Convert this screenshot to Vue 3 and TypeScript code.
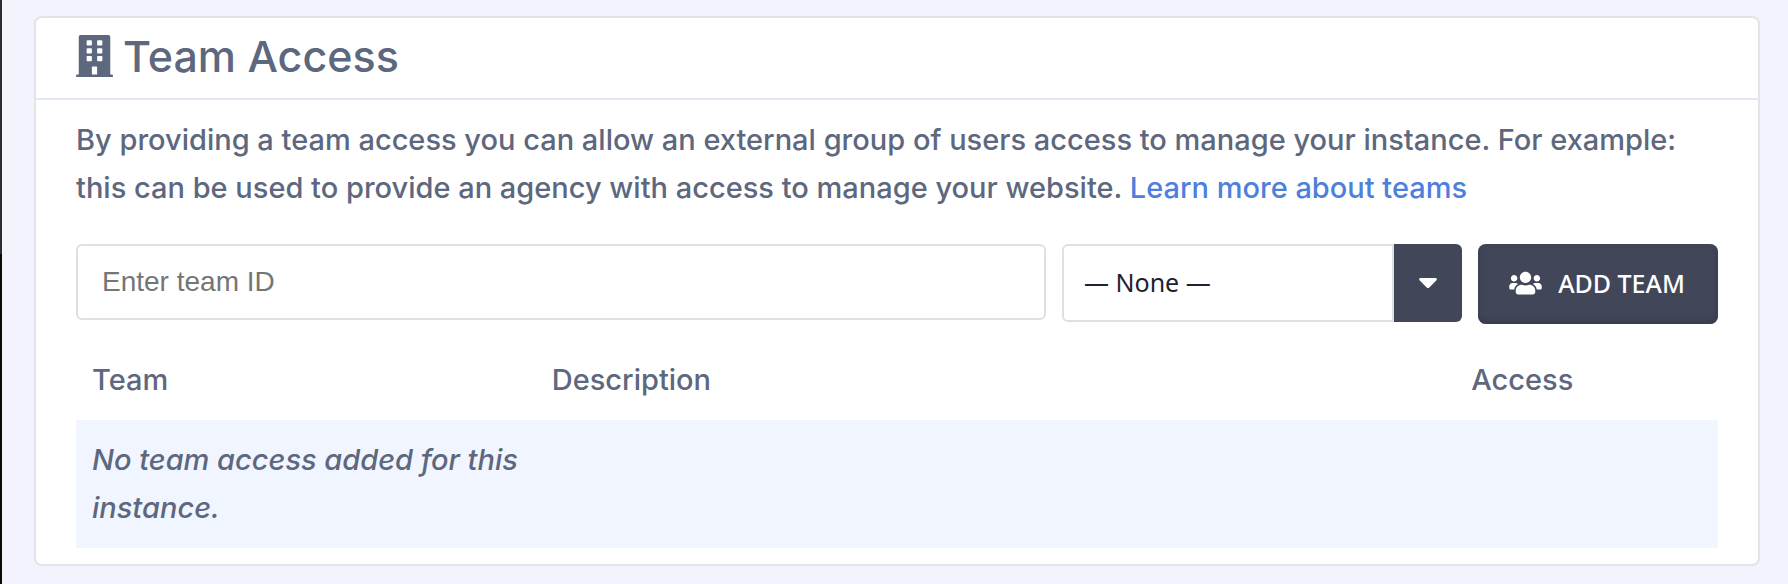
<script setup lang="ts">
import { ref } from 'vue'

interface Option {
  value: string
  label: string
}

const teamId = ref('')
const role = ref('')
const roles: Option[] = [{ value: '', label: '— None —' }]
const columns: string[] = ['Team', 'Description', 'Access']
</script>

<template>
  <main class="page">
    <section class="card" aria-labelledby="team-access-title">
      <header class="card-header">
        <svg class="building" viewBox="0 0 448 512" aria-hidden="true">
          <path
            fill="currentColor"
            fill-rule="evenodd"
            d="M436 480h-20V24c0-13.255-10.745-24-24-24H56C42.745 0 32 10.745 32 24v456H12c-6.627 0-12 5.373-12 12v20h448v-20c0-6.627-5.373-12-12-12zM128 76c0-6.627 5.373-12 12-12h40c6.627 0 12 5.373 12 12v40c0 6.627-5.373 12-12 12h-40c-6.627 0-12-5.373-12-12V76zm0 96c0-6.627 5.373-12 12-12h40c6.627 0 12 5.373 12 12v40c0 6.627-5.373 12-12 12h-40c-6.627 0-12-5.373-12-12v-40zm52 148h-40c-6.627 0-12-5.373-12-12v-40c0-6.627 5.373-12 12-12h40c6.627 0 12 5.373 12 12v40c0 6.627-5.373 12-12 12zm76 160h-64v-84c0-6.627 5.373-12 12-12h40c6.627 0 12 5.373 12 12v84zm64-172c0 6.627-5.373 12-12 12h-40c-6.627 0-12-5.373-12-12v-40c0-6.627 5.373-12 12-12h40c6.627 0 12 5.373 12 12v40zm0-96c0 6.627-5.373 12-12 12h-40c-6.627 0-12-5.373-12-12v-40c0-6.627 5.373-12 12-12h40c6.627 0 12 5.373 12 12v40zm0-96c0 6.627-5.373 12-12 12h-40c-6.627 0-12-5.373-12-12V76c0-6.627 5.373-12 12-12h40c6.627 0 12 5.373 12 12v40z"
          />
        </svg>
        <h2 id="team-access-title">Team Access</h2>
      </header>

      <div class="card-body">
        <p class="intro">
          By providing a team access you can allow an external group of users access to manage your
          instance. For example: this can be used to provide an agency with access to manage your
          website. <a href="#teams">Learn more about teams</a>
        </p>

        <form class="add-form" @submit.prevent>
          <input
            v-model="teamId"
            class="team-id"
            type="text"
            aria-label="Team ID"
            placeholder="Enter team ID"
          />
          <div class="picker">
            <select v-model="role" aria-label="Role">
              <option v-for="item in roles" :key="item.value" :value="item.value">
                {{ item.label }}
              </option>
            </select>
            <span class="picker-caret">
              <svg viewBox="0 0 18 10" aria-hidden="true">
                <path
                  fill="currentColor"
                  d="M1.5 0h15c1.2 0 1.8 1.4 1 2.2l-7.2 7.2a1.9 1.9 0 0 1-2.6 0L.5 2.2C-.3 1.4.3 0 1.5 0z"
                />
              </svg>
            </span>
          </div>
          <button class="add-button" type="submit">
            <svg class="users" viewBox="0 0 640 512" aria-hidden="true">
              <path
                fill="currentColor"
                d="M96 224c35.3 0 64-28.7 64-64s-28.7-64-64-64-64 28.7-64 64 28.7 64 64 64zm448 0c35.3 0 64-28.7 64-64s-28.7-64-64-64-64 28.7-64 64 28.7 64 64 64zm32 32h-64c-17.6 0-33.5 7.1-45.1 18.6 40.3 22.1 68.9 62 75.1 109.4h66c17.7 0 32-14.3 32-32v-32c0-35.3-28.7-64-64-64zm-256 0c61.9 0 112-50.1 112-112S381.9 32 320 32 208 82.1 208 144s50.1 112 112 112zm76.8 32h-8.3c-20.8 10-43.9 16-68.5 16s-47.6-6-68.5-16h-8.3C179.6 288 128 339.6 128 403.2V432c0 26.5 21.5 48 48 48h288c26.5 0 48-21.5 48-48v-28.8c0-63.6-51.6-115.2-115.2-115.2zm-223.7-13.4C161.5 263.1 145.6 256 128 256H64c-35.3 0-64 28.7-64 64v32c0 17.7 14.3 32 32 32h65.9c6.3-47.4 34.9-87.3 75.2-109.4z"
              />
            </svg>
            <span>ADD TEAM</span>
          </button>
        </form>

        <table class="teams">
          <thead>
            <tr>
              <th v-for="name in columns" :key="name" scope="col">{{ name }}</th>
            </tr>
          </thead>
          <tbody>
            <tr>
              <td><em>No team access added for this instance.</em></td>
              <td></td>
              <td></td>
            </tr>
          </tbody>
        </table>
      </div>
    </section>
  </main>
</template>

<style>
body {
  margin: 0;
  background: #f2f3fc;
}
</style>

<style scoped>
.page {
  box-sizing: border-box;
  min-height: 100vh;
  padding: 16px 28px 18px 32px;
  border-left: 2px solid;
  border-image: linear-gradient(#2b2c30 0 254px, #0c0806 254px) 1;
  color: #5d677e;
  font-family: Inter, "Liberation Sans", sans-serif;
  font-size: 29px;
  font-weight: 500;
  line-height: 48px;
}

.card {
  border: 2px solid #e3e4e7;
  border-radius: 8px;
  background: #fff;
}

.card-header {
  display: flex;
  align-items: center;
  gap: 10px;
  padding: 12px 40px 16px;
  border-bottom: 2px solid #e0e7fb;
}

.building {
  width: 37px;
  height: 42px;
}

h2 {
  margin: 0;
  font-size: 43px;
  line-height: 52px;
  font-weight: 500;
}

.card-body {
  padding: 16px 40px;
}

.intro {
  margin: 0 0 32px;
}

a {
  color: #4e7fdc;
  text-decoration: none;
}

.add-form {
  display: flex;
  align-items: flex-start;
  gap: 16px;
  margin-bottom: 16px;
}

.team-id {
  flex: 1;
  box-sizing: border-box;
  min-width: 0;
  height: 76px;
  padding: 0 24px;
  border: 2px solid #e0e0e0;
  border-radius: 6px;
  background: #fff;
  color: #1d2130;
  font: 400 28px "Liberation Sans", Arial, sans-serif;
}

.team-id::placeholder {
  color: #757575;
  opacity: 1;
}

.picker {
  display: grid;
  grid-template-columns: 1fr 68px;
  width: 400px;
  height: 78px;
}

.picker select {
  appearance: none;
  box-sizing: border-box;
  padding: 0 20px 2px;
  border: 2px solid #e0e0e0;
  border-radius: 6px 0 0 6px;
  background: #fff;
  color: #1d2130;
  font: 400 25px "Noto Sans", sans-serif;
}

.picker-caret {
  display: grid;
  place-items: center;
  border-radius: 0 6px 6px 0;
  background: #424659;
  color: #fff;
  pointer-events: none;
}

.picker-caret svg {
  width: 18px;
  height: 10px;
}

.add-button {
  display: flex;
  align-items: center;
  justify-content: center;
  gap: 16px;
  width: 240px;
  height: 80px;
  padding: 0 2px 2px 0;
  border: 0;
  border-radius: 8px;
  background: #424659;
  box-shadow: inset 0 -3px 6px #363b49;
  color: #fff;
  font: 500 25px "Noto Sans", sans-serif;
}

.users {
  width: 33px;
  height: 26px;
}

.teams {
  width: 100%;
  border-collapse: collapse;
  table-layout: fixed;
}

th,
td {
  box-sizing: border-box;
  padding: 16px;
  font-weight: 500;
  text-align: left;
  vertical-align: top;
}

th:nth-child(1) {
  width: 28%;
}

th:nth-child(2) {
  width: 56%;
}

tbody tr {
  background: #f0f5ff;
}
</style>
